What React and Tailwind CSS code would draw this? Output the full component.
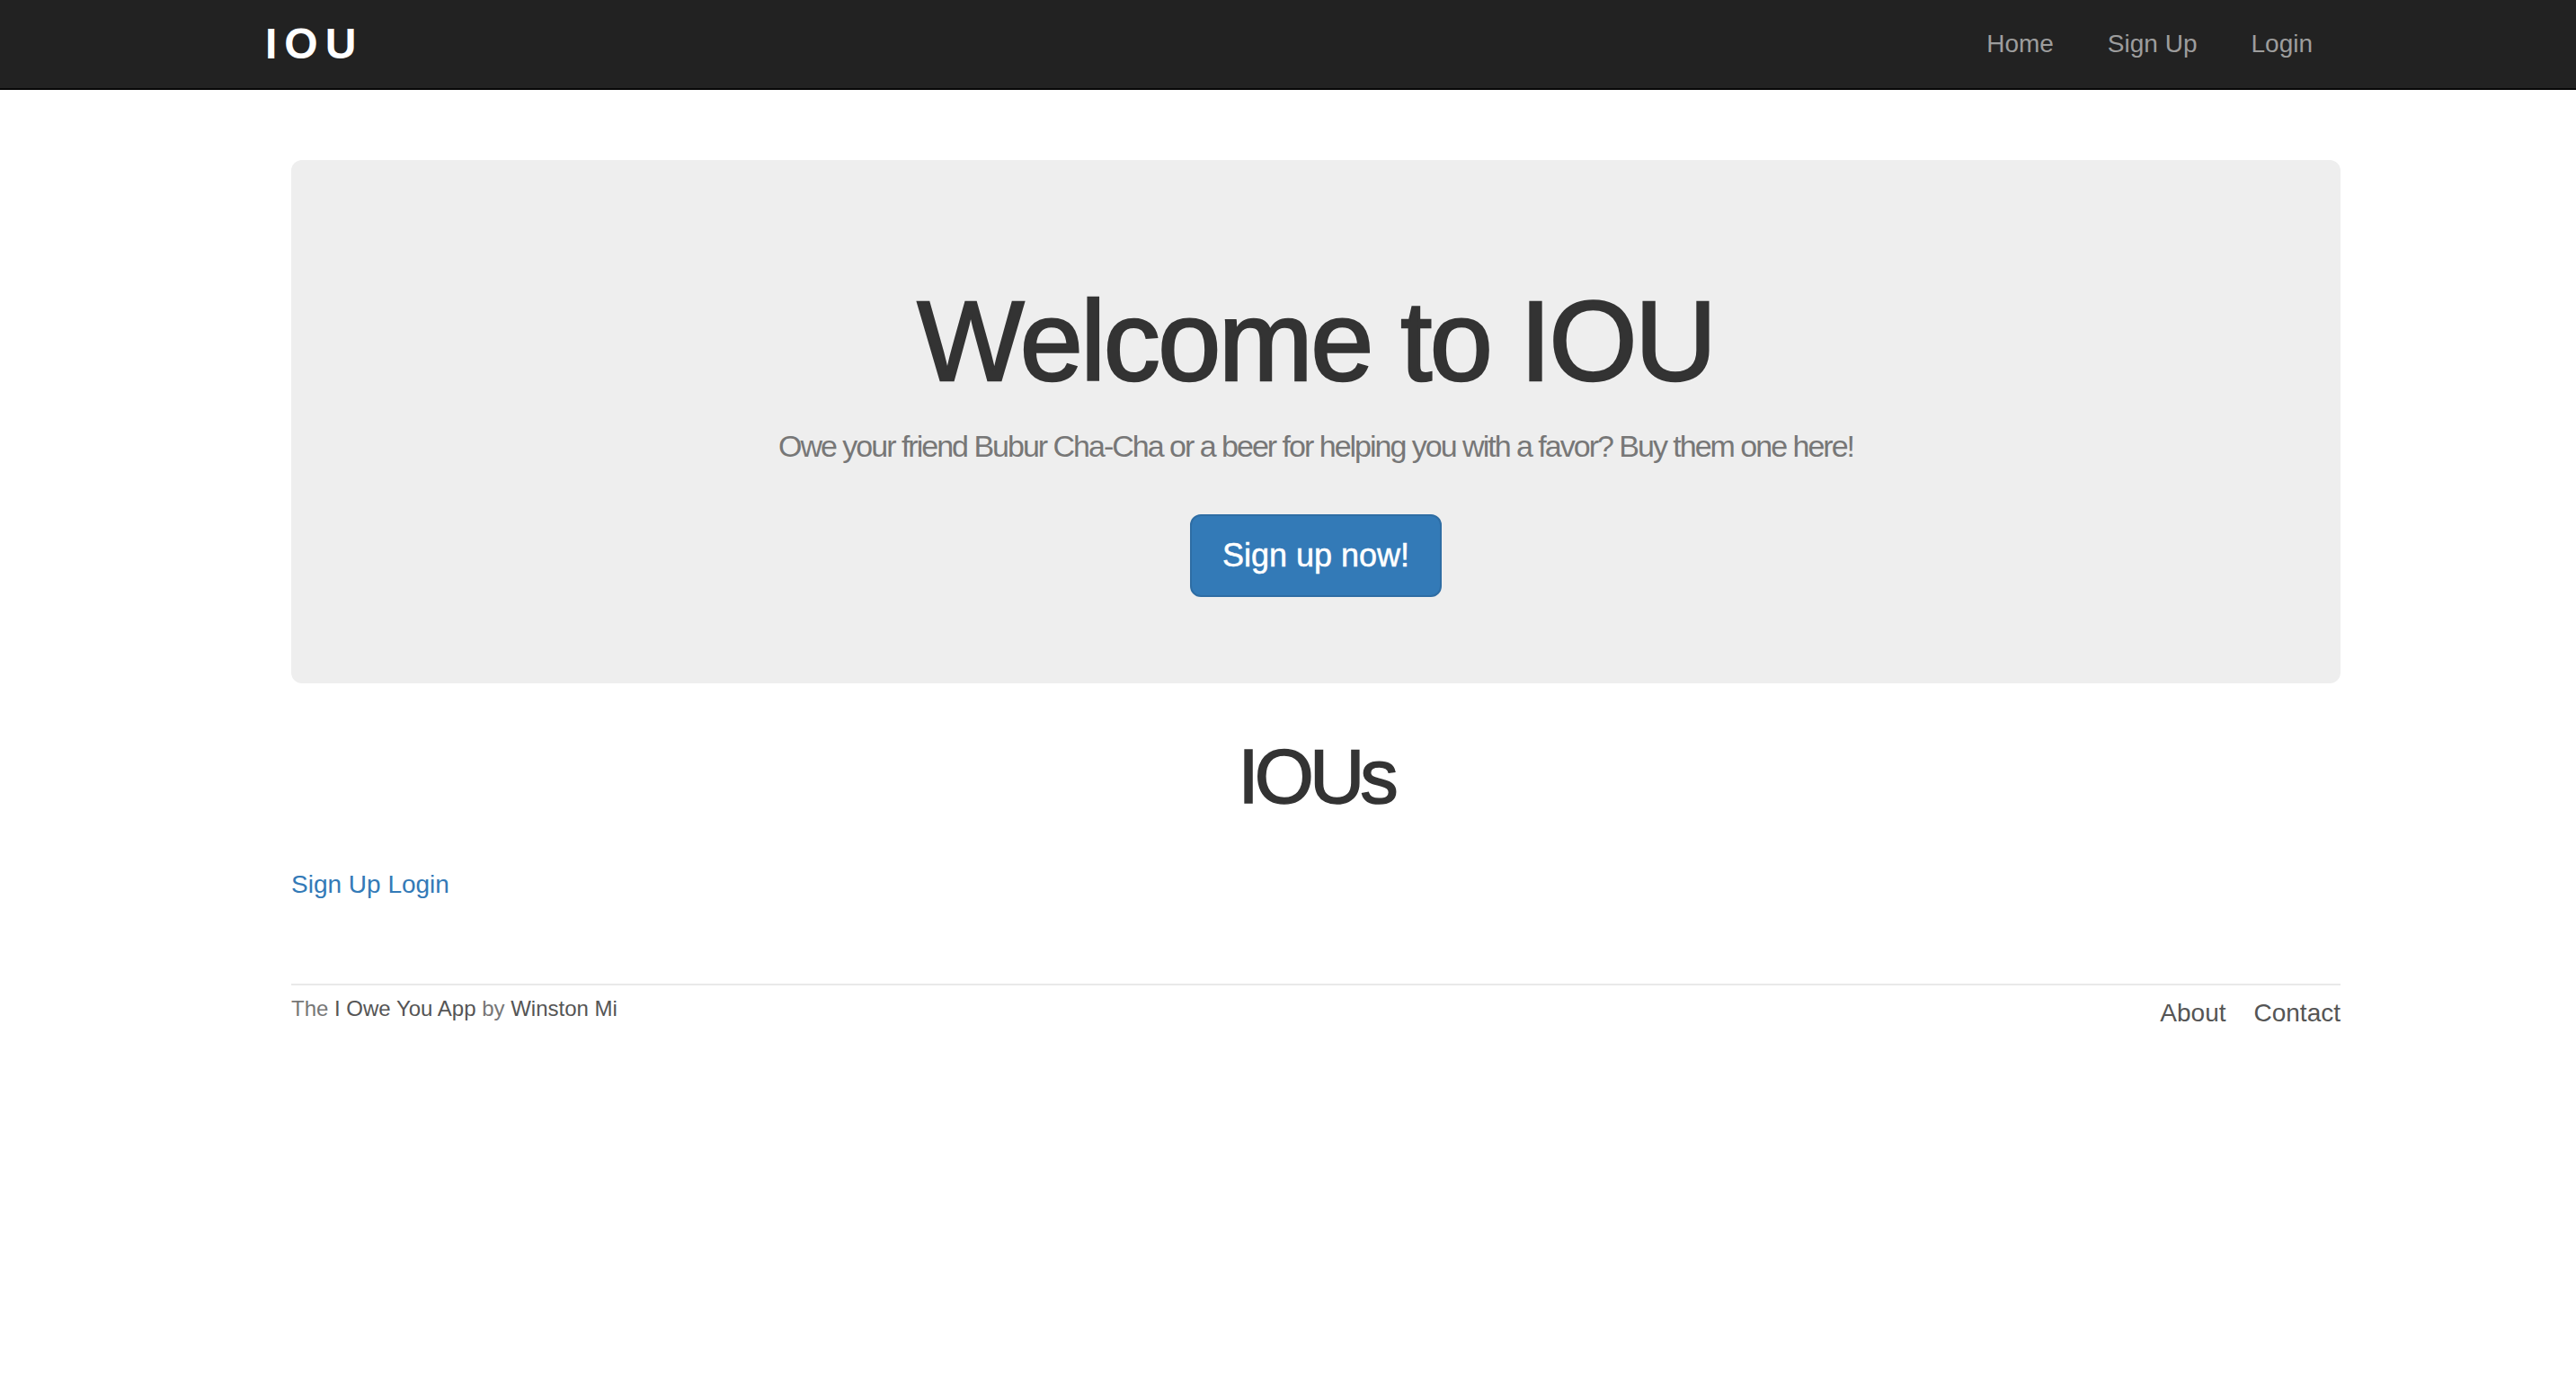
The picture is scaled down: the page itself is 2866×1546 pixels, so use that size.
import React from "react";

const font = { fontFamily: '"Liberation Sans", Arial, Helvetica, sans-serif' };

export default function App() {
  return (
    <div className="min-h-[1546px] w-full bg-white" style={font}>
      <nav className="h-[100px] bg-[#222222] border-b-2 border-[#080808]">
        <div className="flex h-[98px] items-center justify-between pl-[295px] pr-[293px]">
          <a className="text-[48px] font-bold leading-[48px] tracking-[8px] text-white">IOU</a>
          <ul className="flex items-center">
            <li className="pr-[30px] text-[28px] leading-[40px] text-[#9d9d9d]">Home</li>
            <li className="px-[30px] text-[28px] leading-[40px] text-[#9d9d9d]">Sign Up</li>
            <li className="pl-[30px] text-[28px] leading-[40px] text-[#9d9d9d]">Login</li>
          </ul>
        </div>
      </nav>

      <main className="ml-[324px] w-[2280px]">
        <section className="mt-[78px] rounded-[12px] bg-[#eeeeee] pt-[133px] pb-[96px] flex flex-col items-center">
          <h1 className="text-[126px] leading-[138px] font-normal tracking-[-2.5px] text-[#333333] [-webkit-text-stroke:2.5px_#333333]">
            Welcome to IOU
          </h1>
          <p className="mt-[23px] text-[34px] leading-[48px] tracking-[-2px] text-[#777777]">
            Owe your friend Bubur Cha-Cha or a beer for helping you with a favor? Buy them one here!
          </p>
          <button className="mt-[52px] rounded-[12px] border-2 border-[#2e6da4] bg-[#337ab7] px-[34px] py-[20px] text-[36px] leading-[48px] text-white [-webkit-text-stroke:0.5px_#ffffff]">
            Sign up now!
          </button>
        </section>

        <h1 className="mt-[57px] text-center text-[85px] leading-[94px] tracking-[-5px] text-[#333333] [-webkit-text-stroke:1.5px_#333333]">
          IOUs
        </h1>

        <div className="mt-[53px] text-[28px] leading-[40px] text-[#337ab7]">
          <a>Sign Up</a> <a>Login</a>
        </div>

        <footer className="mt-[90px] border-t-2 border-[#e9e9e9] flex justify-between">
          <div className="pt-[9px] text-[24px] leading-[34px] text-[#777777]">
            The <span className="text-[#555555]">I Owe You App</span> by{" "}
            <span className="text-[#555555]">Winston Mi</span>
          </div>
          <ul className="flex pt-[11px] text-[28px] leading-[40px] text-[#555555]">
            <li>About</li>
            <li className="ml-[31px]">Contact</li>
          </ul>
        </footer>
      </main>
    </div>
  );
}
